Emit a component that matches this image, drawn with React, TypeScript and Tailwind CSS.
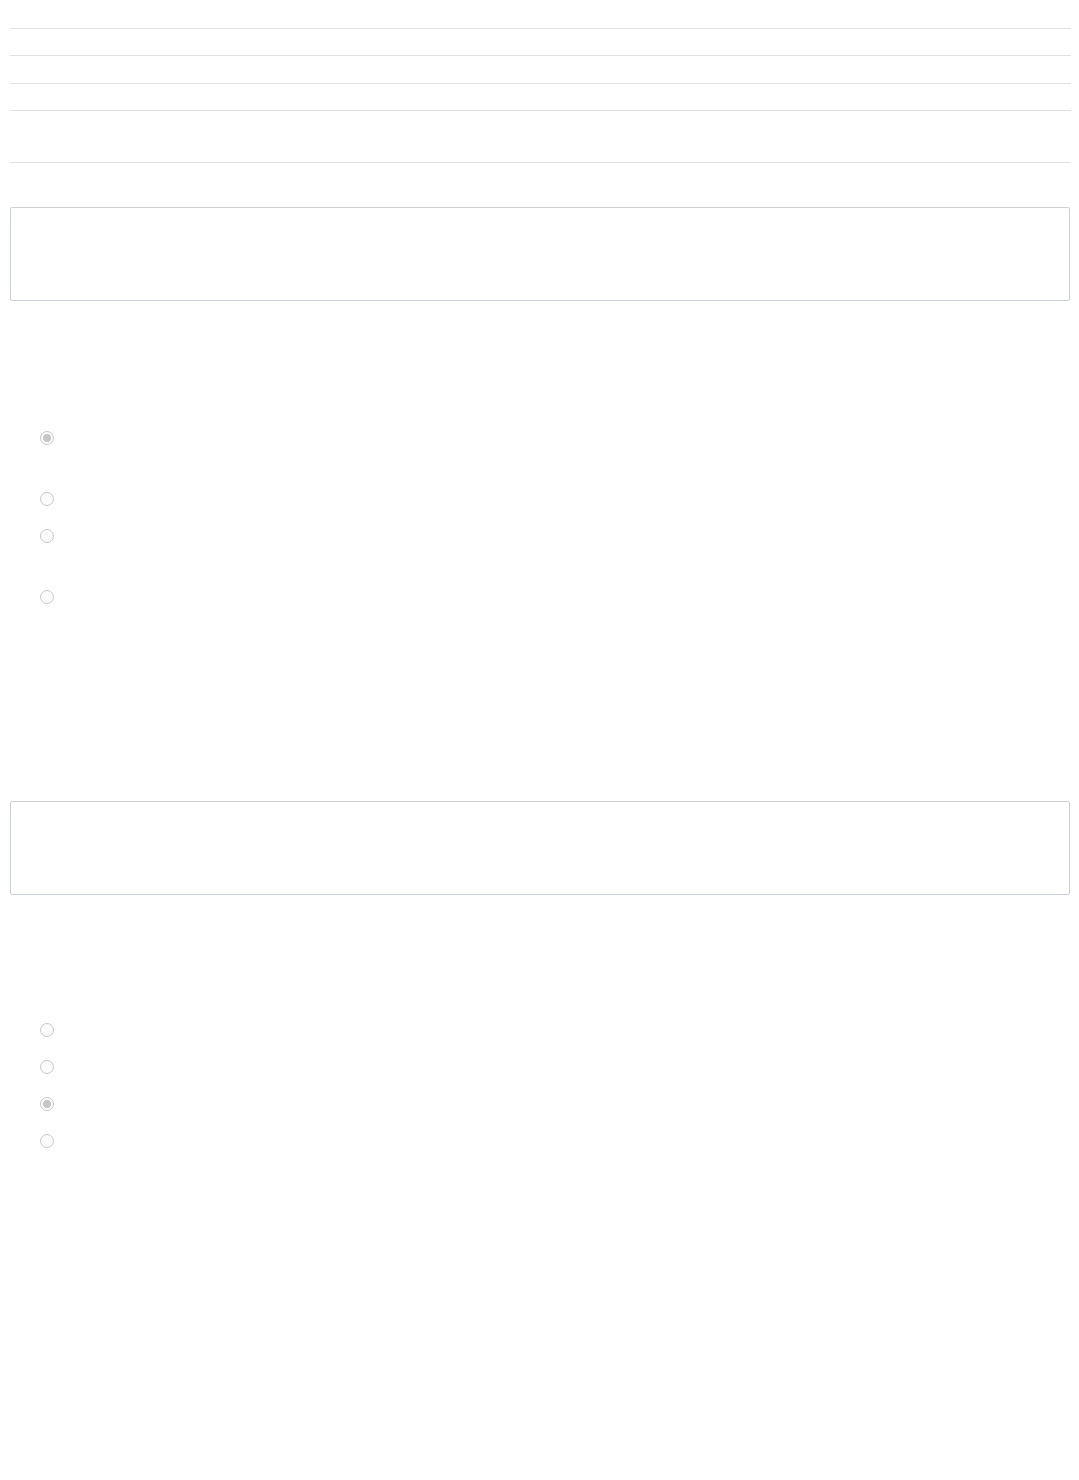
import React from 'react';

const Radio: React.FC<{ checked?: boolean }> = ({ checked }) => (
  <span className="flex h-[14px] w-[14px] items-center justify-center rounded-full border-[1.5px] border-[#c9c9c9] bg-[#fbfbfb]">
    {checked && <span className="h-[8px] w-[8px] rounded-full bg-[#c6c6c6]" />}
  </span>
);

const RadioItem: React.FC<{ checked?: boolean; tall?: boolean }> = ({ checked, tall }) => (
  <div className={`flex items-start pl-[30px] ${tall ? 'h-[61px]' : 'h-[37px]'}`}>
    <Radio checked={checked} />
  </div>
);

const TextBox: React.FC = () => (
  <div className="mr-[1px] h-[94px] rounded-[2px] border border-[#cbd0da] bg-white" />
);

export default function App() {
  return (
    <div className="min-h-[1480px] bg-white pl-[10px] pr-[8px] font-['Liberation_Sans',sans-serif] text-white">
      <div className="flex flex-col">
        <div className="h-[29px] border-b border-[#e1e1e6]" />
        <div className="h-[27px] border-b border-[#e1e1e6]" />
        <div className="h-[28px] border-b border-[#e1e1e6]" />
        <div className="h-[27px] border-b border-[#e1e1e6]" />
        <div className="h-[52px] border-b border-[#e1e1e6]" />
      </div>

      <div className="mt-[44px]">
        <TextBox />
      </div>

      <div className="mt-[130px] flex flex-col">
        <RadioItem checked tall />
        <RadioItem />
        <RadioItem tall />
        <RadioItem />
      </div>

      <div className="mt-[174px]">
        <TextBox />
      </div>

      <div className="mt-[128px] flex flex-col">
        <RadioItem />
        <RadioItem />
        <RadioItem checked />
        <RadioItem />
      </div>
    </div>
  );
}
